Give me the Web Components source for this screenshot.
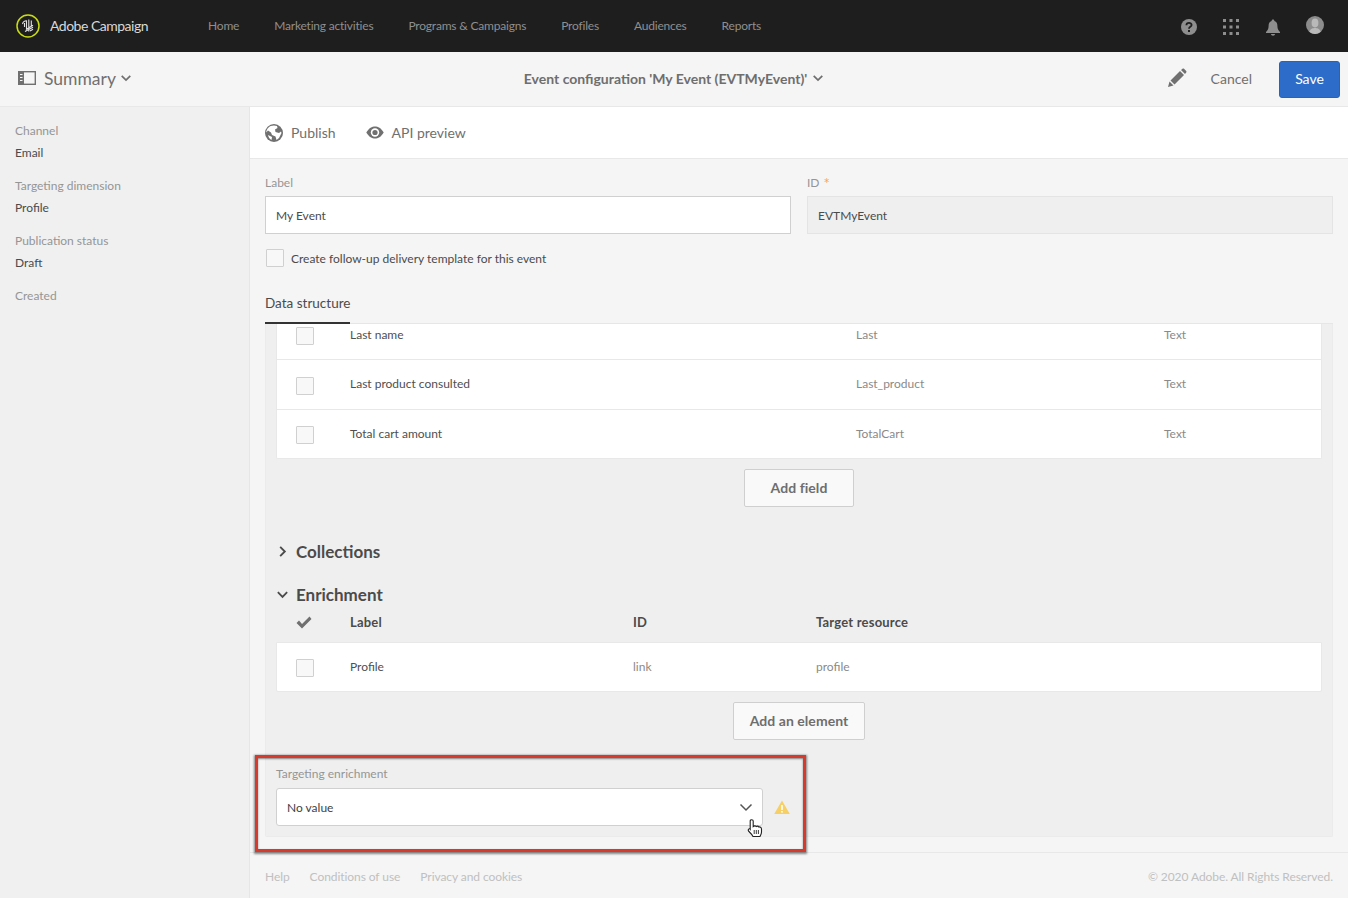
<!DOCTYPE html>
<html>
<head>
<meta charset="utf-8">
<title>Adobe Campaign</title>
<style>
  html, body { margin: 0; height: 100%; }
  body { font-family: Lato, "Open Sans", sans-serif; background: #f5f5f5; overflow: hidden; }
</style>
</head>
<body>
<ac-app></ac-app>
<script>
const ICONS = {
    chevDown: '<path d="M2 4.5 L7 9.5 L12 4.5" fill="none" stroke="currentColor" stroke-width="2"/>',
    chevThin: '<path d="M1.5 4.5 L7 10 L12.5 4.5" fill="none" stroke="currentColor" stroke-width="1.5"/>',
    chevRight: '<path d="M4.5 2 L9.5 7 L4.5 12" fill="none" stroke="currentColor" stroke-width="2"/>'
};

class AcIcon extends HTMLElement {
    connectedCallback() {
        const size = this.getAttribute('size') || 14;
        this.attachShadow({ mode: 'open' }).innerHTML = `
            <style>:host { display: inline-flex; color: inherit; } svg { display: block; }</style>
            <svg width="${size}" height="${size}" viewBox="0 0 14 14">${ICONS[this.getAttribute('name')]}</svg>`;
    }
}
customElements.define('ac-icon', AcIcon);

// top black bar
class AcTopbar extends HTMLElement {
    constructor() {
        super();
        const links = ['Home', 'Marketing activities', 'Programs &amp; Campaigns', 'Profiles', 'Audiences', 'Reports'];
        this.attachShadow({ mode: 'open' }).innerHTML = `
            <style>
                :host { display: flex; align-items: center; height: 52px; background: #1e1e1e; padding: 0 24px 0 16px; flex: none; }
                .logo { display: flex; align-items: center; gap: 10px; color: #d8d8d8; font-size: 14px; letter-spacing: -0.5px; width: 192px; flex: none; }
                .logo span { margin-bottom: 2px; }
                nav { display: flex; gap: 35px; font-size: 12px; letter-spacing: -0.2px; color: #8f8f8f; flex: 1; margin-bottom: 2px; }
                .tools { display: flex; align-items: center; gap: 26px; color: #8e8e8e; padding-top: 2px; }
                svg { display: block; }
            </style>
            <div class="logo">
                <svg width="24" height="24" viewBox="0 0 24 24">
                    <circle cx="12" cy="12" r="11" fill="none" stroke="#c8dc14" stroke-width="1.5"/>
                    <path d="M6.5 10 C7 8 8.500 6.800 10.500 6.800 L10.500 15.500 M8.500 9 L8.500 13 M12.800 5.500 L12.800 17.500 M15.300 6.500 L15.300 12 M9 17.500 L17 13.200 M10 15.500 L17 11.200 M14 17 L17 15.200" fill="none" stroke="#e2e2e2" stroke-width="1.100"/>
                </svg>
                <span>Adobe Campaign</span>
            </div>
            <nav>${links.map(l => `<span>${l}</span>`).join('')}</nav>
            <div class="tools">
                <svg width="16" height="16" viewBox="0 0 16 16"><circle cx="8" cy="8" r="8" fill="currentColor"/><path d="M5.400 6.200 C5.500 3.200 10.600 3.200 10.600 6 C10.600 7.900 8 7.800 8 9.700" fill="none" stroke="#1e1e1e" stroke-width="1.800"/><rect x="7" y="11" width="2" height="2" fill="#1e1e1e"/></svg>
                <svg width="16" height="16" viewBox="0 0 16 16" fill="currentColor">
                    ${[0, 6.5, 13].map(y => [0, 6.5, 13].map(x => `<rect x="${x}" y="${y}" width="3" height="3"/>`).join('')).join('')}
                </svg>
                <svg width="16" height="17" viewBox="0 0 16 17" fill="currentColor"><path d="M8 0.500 C9 0.500 9.400 1.200 9.400 2 C11.600 2.700 12.400 4.600 12.400 7 C12.400 10 13.400 11.500 15 13 L15 14 L1 14 L1 13 C2.600 11.500 3.600 10 3.600 7 C3.600 4.600 4.400 2.700 6.600 2 C6.600 1.200 7 0.500 8 0.500 Z M6 15 L10 15 C10 16 9 16.700 8 16.700 C7 16.700 6 16 6 15 Z"/></svg>
                <svg width="18" height="18" viewBox="0 0 18 18" style="margin:-4px 0 0 -1px"><circle cx="9" cy="9" r="9" fill="#8c8c8c"/><ellipse cx="9" cy="7" rx="3.400" ry="4.400" fill="#b9b9b9"/><path d="M3.500 16 C4 12.500 7 12 9 12 C11 12 14 12.500 14.500 16 C11.500 18.500 6.500 18.500 3.500 16 Z" fill="#b9b9b9"/></svg>
            </div>`;
    }
}
customElements.define('ac-topbar', AcTopbar);

// Summary / title / save row
class AcHeader extends HTMLElement {
    constructor() {
        super();
        this.attachShadow({ mode: 'open' }).innerHTML = `
            <style>
                :host { display: grid; grid-template-columns: 1fr auto 1fr; align-items: center; height: 52px; background: #f5f5f5; border-bottom: 1px solid #e8e8e8; padding: 0 8px 2px 18px; flex: none; color: #707070; }
                .sum { display: flex; align-items: center; font-size: 17.500px; }
                .sum svg { margin-right: 8px; }
                .sum ac-icon { margin-left: 4px; }
                .title { display: flex; align-items: center; gap: 5px; font-size: 14px; font-weight: 700; color: #6e6e6e; margin-right: 10px; }
                .acts { display: flex; align-items: center; justify-content: flex-end; font-size: 14px; }
                .acts svg { margin-right: 24px; }
                .save { background: #2d6cc8; color: #fff; border: 1px solid #2a62b4; border-radius: 3px; width: 61px; height: 37px; margin: 3px 0 0 27px; display: flex; align-items: center; justify-content: center; box-sizing: border-box; padding-bottom: 3px; }
            </style>
            <div class="sum">
                <svg width="18" height="14" viewBox="0 0 18 14"><rect x="0.700" y="0.700" width="16.600" height="12.600" fill="none" stroke="#707070" stroke-width="1.400"/><rect x="0.700" y="0.700" width="5.300" height="12.600" fill="#707070"/><path d="M2 3.500h2.500M2 6.500h2.500M2 9.500h2.500" stroke="#f5f5f5" stroke-width="1"/></svg>
                <span>Summary</span>
                <ac-icon name="chevDown" size="12"></ac-icon>
            </div>
            <div class="title"><span>Event configuration 'My Event (EVTMyEvent)'</span><ac-icon name="chevDown" size="12"></ac-icon></div>
            <div class="acts">
                <svg width="20" height="20" viewBox="0 0 20 20" fill="#707070"><path d="M1 19 L2.500 13.500 L6.500 17.500 Z M3.500 12.500 L13 3 L17 7 L7.500 16.500 Z M14 2 L15.500 0.800 C16 0.400 16.500 0.400 17 0.800 L19.200 3 C19.600 3.500 19.600 4 19.200 4.500 L18 6 Z"/></svg>
                <span>Cancel</span>
                <div class="save">Save</div>
            </div>`;
    }
}
customElements.define('ac-header', AcHeader);

class AcSidebar extends HTMLElement {
    constructor() {
        super();
        const items = [['Channel', 'Email'], ['Targeting dimension', 'Profile'], ['Publication status', 'Draft'], ['Created', '']];
        this.attachShadow({ mode: 'open' }).innerHTML = `
            <style>
                :host { display: flex; flex-direction: column; gap: 15px; width: 250px; box-sizing: border-box; flex: none; background: #f0f0f0; border-right: 1px solid #e6e6e6; padding: 15px 15px 0; font-size: 12px; }
                .k { color: #959595; line-height: 18px; }
                .v { color: #4b4b4b; line-height: 18px; margin-top: 4px; }
            </style>
            ${items.map(([k, v]) => `<div><div class="k">${k}</div>${v ? `<div class="v">${v}</div>` : ''}</div>`).join('')}`;
    }
}
customElements.define('ac-sidebar', AcSidebar);

class AcCheckbox extends HTMLElement {
    constructor() {
        super();
        this.attachShadow({ mode: 'open' }).innerHTML = `
            <style>:host { display: block; width: 18px; height: 18px; box-sizing: border-box; background: #f8f8f8; border: 1px solid #d0d0d0; border-radius: 1px; flex: none; }</style>`;
    }
}
customElements.define('ac-checkbox', AcCheckbox);

// one row of a white table, columns are passed through the attribute
class AcRow extends HTMLElement {
    constructor() {
        super();
        const cells = (this.getAttribute('cells') || '').split('|');
        const cols = this.getAttribute('cols');
        this.attachShadow({ mode: 'open' }).innerHTML = `
            <style>
                :host { display: grid; grid-template-columns: ${cols}; align-items: center; height: 49px; box-sizing: border-box; border-bottom: 1px solid #e8e8e8; font-size: 12px; color: #8a8a8a; padding-left: 19px; }
                :host(:last-child) { border-bottom: 0; }
                ac-checkbox { margin-top: 2px; }
                span { margin-bottom: 2px; }
                .first { color: #4f4f4f; }
            </style>
            <ac-checkbox></ac-checkbox>
            ${cells.map((c, i) => `<span class="${i === 0 ? 'first' : ''}">${c}</span>`).join('')}`;
    }
}
customElements.define('ac-row', AcRow);

class AcSection extends HTMLElement {
    constructor() {
        super();
        const open = this.hasAttribute('open');
        this.attachShadow({ mode: 'open' }).innerHTML = `
            <style>
                :host { display: flex; align-items: center; gap: 7px; font-size: 17px; font-weight: 700; color: #4b4b4b; height: 24px; }
            </style>
            <ac-icon name="${open ? 'chevDown' : 'chevRight'}" size="13"></ac-icon>
            <slot></slot>`;
    }
}
customElements.define('ac-section', AcSection);

class AcButton extends HTMLElement {
    constructor() {
        super();
        this.attachShadow({ mode: 'open' }).innerHTML = `
            <style>
                :host { display: flex; align-items: center; justify-content: center; height: 38px; box-sizing: border-box; background: #f9f9f9; border: 1px solid #cfcfcf; border-radius: 2px; font-size: 14px; font-weight: 700; letter-spacing: 0.05px; color: #6e6e6e; padding-bottom: 2px; }
            </style>
            <slot></slot>`;
    }
}
customElements.define('ac-button', AcButton);

class AcField extends HTMLElement {
    constructor() {
        super();
        const req = this.hasAttribute('required') ? ' <b>*</b>' : '';
        this.attachShadow({ mode: 'open' }).innerHTML = `
            <style>
                :host { display: block; font-size: 12px; }
                .l { color: #959595; line-height: 18px; margin-bottom: 4px; }
                b { color: #f0a868; font-weight: 400; font-size: 15px; line-height: 12px; margin-left: 1px; vertical-align: -2px; }
                .box { height: 38px; box-sizing: border-box; border: 1px solid #d0d0d0; background: #fff; display: flex; align-items: center; padding: 0 10px; color: #4b4b4b; }
                :host([disabled]) .box { background: #efefef; border-color: #e4e4e4; }
            </style>
            <div class="l">${this.getAttribute('label')}${req}</div>
            <div class="box"><slot></slot></div>`;
    }
}
customElements.define('ac-field', AcField);

class AcMain extends HTMLElement {
    constructor() {
        super();
        this.attachShadow({ mode: 'open' }).innerHTML = `
            <style>
                :host { display: flex; flex-direction: column; flex: 1; min-width: 0; background: #f5f5f5; position: relative; }
                .tools { display: flex; align-items: center; height: 52px; background: #fff; border-bottom: 1px solid #e8e8e8; box-sizing: border-box; padding: 0 15px; font-size: 14px; color: #707070; flex: none; }
                .tools span { margin-left: 8px; }
                .tools svg + span + svg { margin-left: 30px; }
                .form { padding: 15px 15px 0; flex: none; }
                .fields { display: grid; grid-template-columns: 526px 526px; gap: 16px; }
                .check { display: flex; align-items: center; gap: 7px; margin: 14px 0 0 1px; font-size: 12px; color: #4b4b4b; height: 20px; }
                .tabs { margin-top: 21px; height: 35px; border-bottom: 1px solid #e6e6e6; font-size: 13.500px; color: #4b4b4b; box-sizing: border-box; }
                .tabs span { display: inline-block; height: 35px; line-height: 29px; box-sizing: border-box; border-bottom: 2px solid #333; }
                .panel { margin: 0 15px; height: 513px; background: #efefef; border: 1px solid #ebebeb; border-top: 0; border-radius: 0 0 2px 2px; padding: 0 10px; box-sizing: border-box; flex: none; }
                .table { background: #fff; border: 1px solid #e8e8e8; border-top: 0; border-radius: 0 0 2px 2px; }
                .add { display: flex; justify-content: center; margin-top: 10px; }
                .head { display: grid; grid-template-columns: 54px 283px 183px 1fr; padding: 1px 0 5px 20px; align-items: center; height: 36px; box-sizing: border-box; font-size: 13px; letter-spacing: 0.2px; font-weight: 700; color: #4b4b4b; }
                .te { margin-top: 25px; width: 530px; }
                .te .row { display: flex; align-items: center; gap: 11px; }
                .te .l { font-size: 12px; color: #959595; line-height: 18px; margin-bottom: 5px; }
                .select { flex: none; width: 487px; height: 38px; box-sizing: border-box; background: #fff; border: 1px solid #d0d0d0; border-radius: 3px; display: flex; align-items: center; justify-content: space-between; padding: 0 9px 0 10px; font-size: 12px; color: #3f3f3f; }
                footer { flex: 1; margin-top: 15px; border-top: 1px solid #e8e8e8; display: flex; align-items: flex-start; padding: 16px 15px 0; font-size: 12px; letter-spacing: -0.07px; color: #c0c0c0; gap: 20px; }
                footer .copy { margin-left: auto; }
                .mark { position: absolute; left: 5px; top: 648px; width: 551px; height: 97px; box-sizing: border-box; border: 3px solid #d7392c; box-shadow: 0 1px 2px 1px rgba(0,0,0,.45), inset 0 1px 2px rgba(0,0,0,.45); pointer-events: none; }
                .hand { position: absolute; left: 497px; top: 712px; }
            </style>
            <div class="tools">
                <svg width="18" height="18" viewBox="0 0 18 18"><circle cx="9" cy="9" r="9" fill="#707070"/><path d="M9 1.500 L12 2 L12.500 4 L10 5.500 L10.500 8 L14 9 L16 7.500 L16.500 9 L14 14 L11.500 16 L10.500 12.500 L7 11 L6 8.500 L3 6.500 L1.200 8.500 C1.500 5 4 1.500 9 1.500 Z M3 11 L7 13 L6.500 16 C5 15.500 3.500 13.500 3 11 Z" fill="#fff"/></svg>
                <span>Publish</span>
                <svg width="18" height="13" viewBox="0 0 18 13"><path d="M0.300 6.500 C3 2 6 0.500 9 0.500 C12 0.500 15 2 17.700 6.500 C15 11 12 12.500 9 12.500 C6 12.500 3 11 0.300 6.500 Z" fill="#707070"/><circle cx="9" cy="6.500" r="4.200" fill="#fff"/><circle cx="9" cy="6.500" r="2.600" fill="#707070"/></svg>
                <span>API preview</span>
            </div>
            <div class="form">
                <div class="fields">
                    <ac-field label="Label">My Event</ac-field>
                    <ac-field label="ID" required disabled>EVTMyEvent</ac-field>
                </div>
                <div class="check"><ac-checkbox></ac-checkbox>Create follow-up delivery template for this event</div>
                <div class="tabs"><span>Data structure</span></div>
            </div>
            <div class="panel">
                <div class="table">
                    <ac-row cols="54px 506px 308px 1fr" cells="Last name|Last|Text" style="height:36px;padding-bottom:13px"></ac-row>
                    <ac-row cols="54px 506px 308px 1fr" cells="Last product consulted|Last_product|Text" style="height:50px"></ac-row>
                    <ac-row cols="54px 506px 308px 1fr" cells="Total cart amount|TotalCart|Text" style="height:48px"></ac-row>
                </div>
                <div class="add"><ac-button style="width:110px">Add field</ac-button></div>
                <ac-section style="margin-top:32px">Collections</ac-section>
                <ac-section open style="margin-top:19px">Enrichment</ac-section>
                <div class="head">
                    <svg width="16" height="13" viewBox="0 0 16 13"><path d="M0.500 7 L3 4.500 L6 8 L13.500 0.500 L15.500 3 L6 12.500 Z" fill="#707070"/></svg>
                    <span>Label</span><span>ID</span><span>Target resource</span>
                </div>
                <div class="table" style="border-top:1px solid #e8e8e8">
                    <ac-row cols="54px 283px 183px 1fr" cells="Profile|link|profile" style="height:48px"></ac-row>
                </div>
                <div class="add"><ac-button style="width:132px">Add an element</ac-button></div>
                <div class="te">
                    <div class="l">Targeting enrichment</div>
                    <div class="row">
                        <div class="select"><span>No value</span><ac-icon name="chevThin" size="14" style="color:#555"></ac-icon></div>
                        <svg width="16" height="14" viewBox="0 0 16 14"><path d="M8 0.500 L15.800 14 L0.200 14 Z" fill="#f6cf66"/><rect x="7.200" y="5" width="1.600" height="5" fill="#fff"/><rect x="7.200" y="11" width="1.600" height="1.600" fill="#fff"/></svg>
                    </div>
                </div>
            </div>
            <footer><span>Help</span><span>Conditions of use</span><span>Privacy and cookies</span><span class="copy">© 2020 Adobe. All Rights Reserved.</span></footer>
            <div class="mark"></div>
            <svg class="hand" width="16" height="19" viewBox="0 0 16 19"><path d="M3.200 2 C3.200 0.300 6.200 0.300 6.200 2 L6.200 7.500 C7 6.700 8.500 6.700 9.200 7.500 C10 7 11.300 7.200 11.800 8 C12.800 7.700 14.500 8.300 14.500 10 L14.500 13 C14.500 15 13.700 16 13 17.500 L6 17.500 C5 15.500 3.500 14 1.500 12 C0.500 10.500 2.300 9 3.200 10.300 Z" fill="#fff" stroke="#222" stroke-width="1.100"/><path d="M7.200 11v4M9.300 11v4M11.400 11v4" stroke="#222" stroke-width="0.900"/></svg>`;
    }
}
customElements.define('ac-main', AcMain);

class AcApp extends HTMLElement {
    constructor() {
        super();
        this.attachShadow({ mode: 'open' }).innerHTML = `
            <style>
                :host { display: flex; flex-direction: column; height: 898px; }
                .body { display: flex; flex: 1; min-height: 0; }
            </style>
            <ac-topbar></ac-topbar>
            <ac-header></ac-header>
            <div class="body"><ac-sidebar></ac-sidebar><ac-main></ac-main></div>`;
    }
}
customElements.define('ac-app', AcApp);
</script>
</body>
</html>
